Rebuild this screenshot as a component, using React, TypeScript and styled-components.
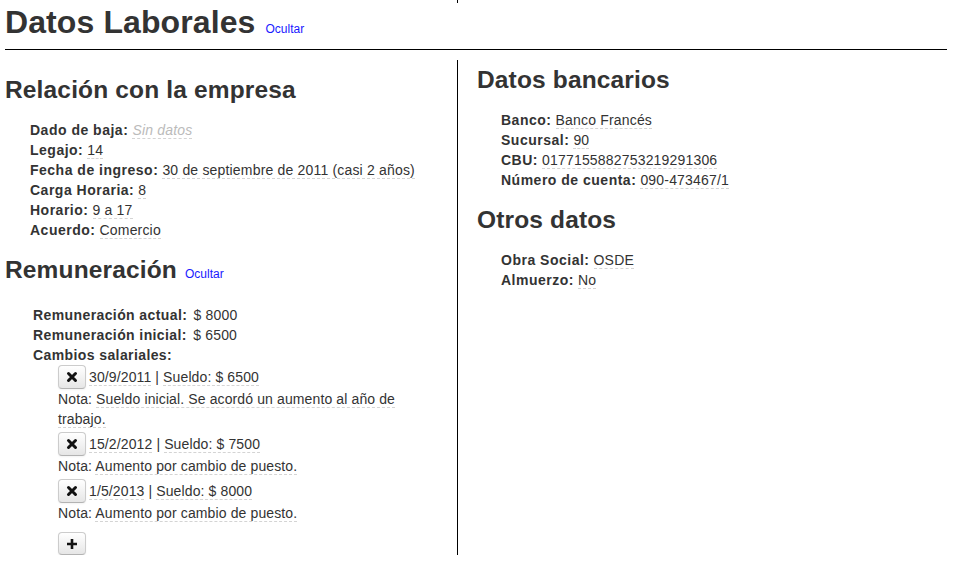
import React from "react";
import styled, { createGlobalStyle } from "styled-components";

const GlobalStyle = createGlobalStyle`
  html, body {
    margin: 0;
    padding: 0;
    background: #fff;
  }
  body {
    font-family: "Liberation Sans", Arial, Helvetica, sans-serif;
    font-size: 14px;
    line-height: 20px;
    letter-spacing: 0.18px;
    color: #333;
  }
`;

const Page = styled.div`
  padding: 0 6px 0 5px;
`;

const Stub = styled.div`
  width: 453px;
  height: 3px;
  box-sizing: border-box;
  border-right: 1px solid #000;
`;

const Title = styled.h1`
  margin: 0;
  font-size: 32px;
  line-height: 38px;
  font-weight: bold;
  letter-spacing: 0.1px;
  color: #333;
`;

const SectionTitle = styled.h3`
  margin: 0;
  font-size: 24.5px;
  line-height: 40px;
  font-weight: bold;
  letter-spacing: 0.15px;
  color: #333;
`;

const ToggleLink = styled.a<{ $gap?: number }>`
  margin-left: ${(p) => p.$gap ?? 8}px;
  font-size: 12px;
  line-height: 1;
  font-weight: normal;
  letter-spacing: 0;
  color: #1a1aff;
  text-decoration: none;
  cursor: pointer;
`;

const Rule = styled.hr`
  margin: 8px 0 10px;
  border: 0;
  border-top: 1px solid #000;
  height: 0;
`;

const Columns = styled.div`
  display: flex;
  align-items: flex-start;
`;

const LeftColumn = styled.div`
  width: 453px;
  box-sizing: border-box;
  border-right: 1px solid #000;
  padding: 10px 22px 0 0;
`;

const RightColumn = styled.div`
  flex: 1;
  padding-left: 19px;
`;

const FieldList = styled.ul<{ $indent?: number }>`
  list-style: none;
  margin: 10px 0 10px ${(p) => p.$indent ?? 25}px;
  padding: 0;
`;

const Field = styled.li`
  line-height: 20px;
`;

const Label = styled.b`
  font-weight: bold;
  letter-spacing: 0.5px;
`;

const Editable = styled.span<{ $empty?: boolean }>`
  border-bottom: 1px dashed #d4d4d4;
  color: ${(p) => (p.$empty ? "#bbb" : "#333")};
  font-style: ${(p) => (p.$empty ? "italic" : "normal")};
`;

const PayBlock = styled.div`
  margin: 15px 0 0 28px;
`;

const PayRow = styled.div`
  line-height: 20px;
  font-weight: bold;
  letter-spacing: 0.4px;
`;

const PayValue = styled.span`
  font-weight: normal;
  letter-spacing: 0.18px;
  margin-left: 2px;
`;

const ChangeList = styled.ul`
  list-style: none;
  margin: 0 0 0 25px;
  padding: 0;
  font-weight: normal;
  letter-spacing: 0.12px;
`;

const ChangeItem = styled.li`
  margin-bottom: 3px;
`;

const ChangeHead = styled.div`
  display: flex;
  align-items: center;
  height: 24px;
`;

const ChangeText = styled.span`
  margin-left: 3px;
`;

const Note = styled.div`
  line-height: 20px;
`;

const IconButton = styled.button<{ $h?: number }>`
  display: inline-flex;
  align-items: center;
  justify-content: center;
  width: 28px;
  height: ${(p) => p.$h ?? 24}px;
  padding: 0;
  box-sizing: border-box;
  border: 1px solid #ccc;
  border-bottom-color: #b3b3b3;
  border-radius: 4px;
  background: linear-gradient(#ffffff, #e6e6e6);
  box-shadow: inset 0 1px 0 rgba(255, 255, 255, 0.2), 0 1px 2px rgba(0, 0, 0, 0.05);
  cursor: pointer;
`;

const AddRow = styled.div`
  margin: 9px 0 0 25px;
`;

const RemoveIcon = () => (
  <svg width="12" height="12" viewBox="0 0 12 12">
    <path d="M2.5 2.5 L9.5 9.5 M9.5 2.5 L2.5 9.5" stroke="#111" strokeWidth="3" strokeLinecap="round" />
  </svg>
);

const PlusIcon = () => (
  <svg width="12" height="12" viewBox="0 0 12 12">
    <path d="M6 1 V11 M1 6 H11" stroke="#111" strokeWidth="2.6" />
  </svg>
);

const changes = [
  { date: "30/9/2011", amount: "$ 6500", note: "Sueldo inicial. Se acordó un aumento al año de trabajo." },
  { date: "15/2/2012", amount: "$ 7500", note: "Aumento por cambio de puesto." },
  { date: "1/5/2013", amount: "$ 8000", note: "Aumento por cambio de puesto." },
];

const company: [string, string, boolean?][] = [
  ["Dado de baja:", "Sin datos", true],
  ["Legajo:", "14"],
  ["Fecha de ingreso:", "30 de septiembre de 2011 (casi 2 años)"],
  ["Carga Horaria:", "8"],
  ["Horario:", "9 a 17"],
  ["Acuerdo:", "Comercio"],
];

const bank: [string, string][] = [
  ["Banco:", "Banco Francés"],
  ["Sucursal:", "90"],
  ["CBU:", "0177155882753219291306"],
  ["Número de cuenta:", "090-473467/1"],
];

const other: [string, string][] = [
  ["Obra Social:", "OSDE"],
  ["Almuerzo:", "No"],
];

const renderFields = (rows: [string, string, boolean?][]) =>
  rows.map(([label, value, empty]) => (
    <Field key={label}>
      <Label>{label}</Label> <Editable $empty={empty}>{value}</Editable>
    </Field>
  ));

export default function App() {
  return (
    <>
      <GlobalStyle />
      <Page>
        <Stub />
        <Title>
          Datos Laborales<ToggleLink $gap={10}>Ocultar</ToggleLink>
        </Title>
        <Rule />
        <Columns>
          <LeftColumn>
            <SectionTitle>Relación con la empresa</SectionTitle>
            <FieldList>{renderFields(company)}</FieldList>

            <SectionTitle>
              Remuneración<ToggleLink>Ocultar</ToggleLink>
            </SectionTitle>
            <PayBlock>
              <PayRow>
                Remuneración actual: <PayValue>$ 8000</PayValue>
              </PayRow>
              <PayRow>
                Remuneración inicial: <PayValue>$ 6500</PayValue>
              </PayRow>
              <PayRow>Cambios salariales:</PayRow>
              <ChangeList>
                {changes.map((c) => (
                  <ChangeItem key={c.date}>
                    <ChangeHead>
                      <IconButton>
                        <RemoveIcon />
                      </IconButton>
                      <ChangeText>
                        <Editable>{c.date}</Editable> | <Editable>Sueldo: {c.amount}</Editable>
                      </ChangeText>
                    </ChangeHead>
                    <Note>
                      Nota: <Editable>{c.note}</Editable>
                    </Note>
                  </ChangeItem>
                ))}
              </ChangeList>
              <AddRow>
                <IconButton $h={23}>
                  <PlusIcon />
                </IconButton>
              </AddRow>
            </PayBlock>
          </LeftColumn>

          <RightColumn>
            <SectionTitle>Datos bancarios</SectionTitle>
            <FieldList $indent={24}>{renderFields(bank)}</FieldList>
            <SectionTitle>Otros datos</SectionTitle>
            <FieldList $indent={24}>{renderFields(other)}</FieldList>
          </RightColumn>
        </Columns>
      </Page>
    </>
  );
}
